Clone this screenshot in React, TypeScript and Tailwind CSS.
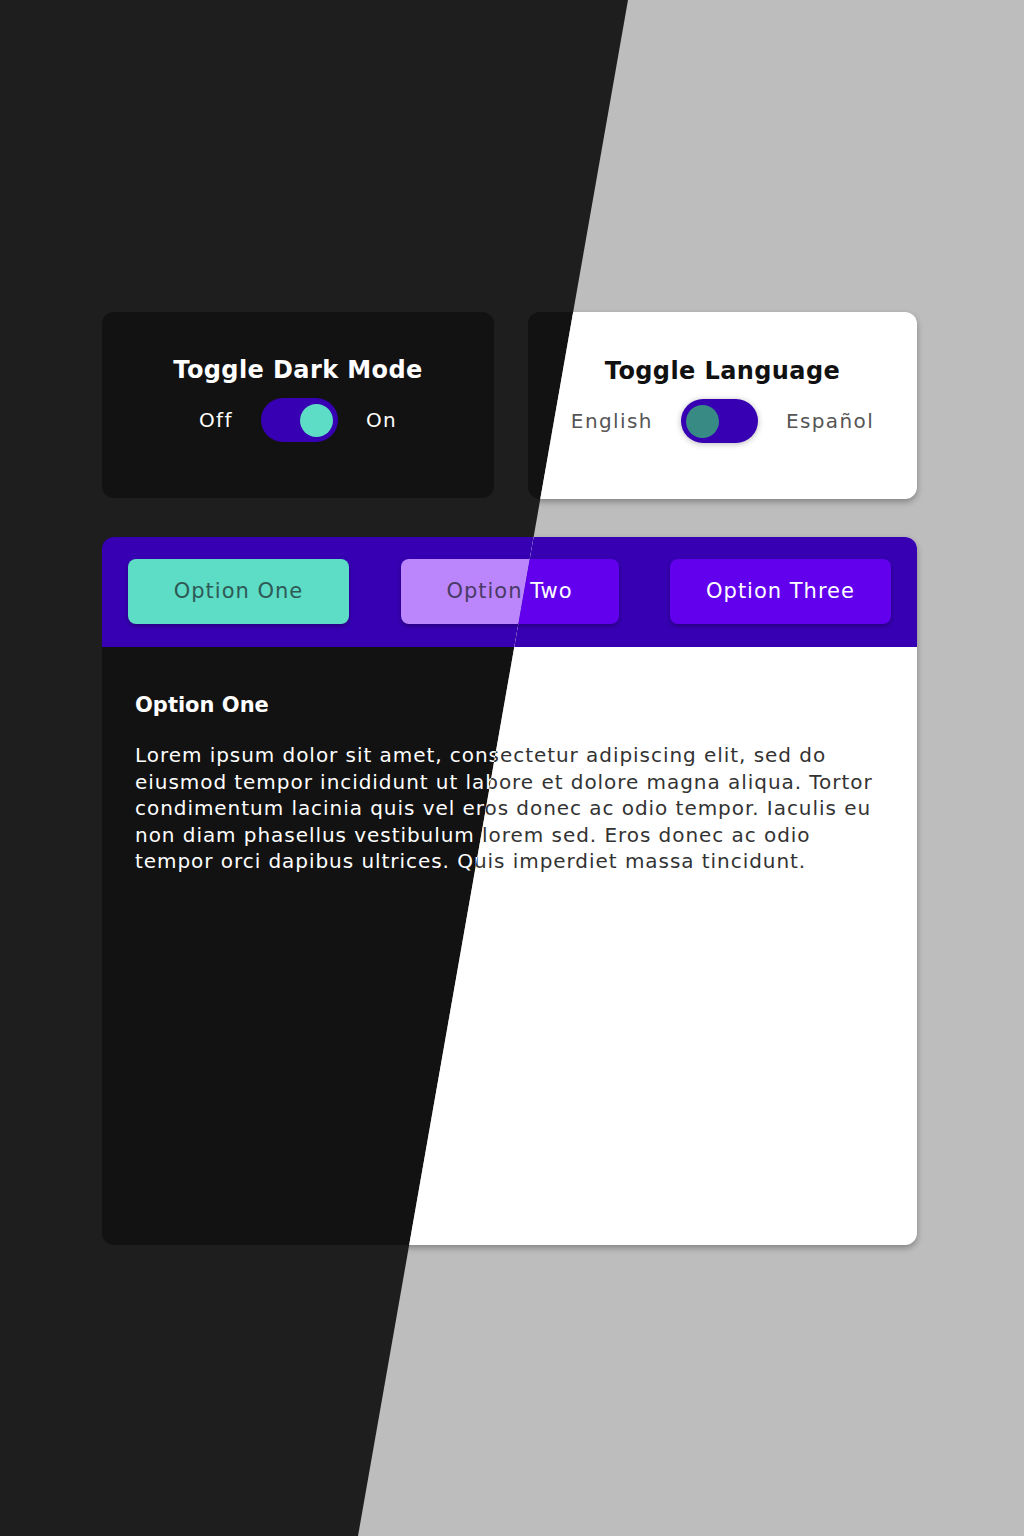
import React from "react";

const lines = [
  "Lorem ipsum dolor sit amet, consectetur adipiscing elit, sed do",
  "eiusmod tempor incididunt ut labore et dolore magna aliqua. Tortor",
  "condimentum lacinia quis vel eros donec ac odio tempor. Iaculis eu",
  "non diam phasellus vestibulum lorem sed. Eros donec ac odio",
  "tempor orci dapibus ultrices. Quis imperdiet massa tincidunt.",
];

function Toggle({ on, dark }: { on: boolean; dark: boolean }) {
  return (
    <div
      className={
        "flex items-center w-[77px] h-[44px] rounded-full bg-[#3700b3] px-[5px] " +
        (on ? "justify-end " : "justify-start ") +
        (dark ? "" : "shadow-[0_1px_6px_rgba(0,0,0,0.28)]")
      }
    >
      <div
        className={
          "w-[33px] h-[33px] rounded-full " +
          (dark ? "bg-[#5ddcc6]" : "bg-[#388a85]")
        }
      />
    </div>
  );
}

function Scene({ dark }: { dark: boolean }) {
  const card = dark
    ? "bg-[#121212]"
    : "bg-white shadow-[0_3px_6px_rgba(0,0,0,0.3)]";
  const title = dark ? "text-white" : "text-[#111111]";
  const label = dark ? "text-white" : "text-[#555555]";

  return (
    <div
      className={
        "w-full h-[1536px] pt-[312px] font-['DejaVu_Sans',sans-serif] " +
        (dark ? "bg-[#1e1e1e]" : "bg-[#bdbdbd]")
      }
    >
      <div className="ml-[102px] w-[815px] flex flex-col gap-[38px]">
        {/* Toggles */}
        <div className="flex gap-[34px]">
          <div className={"w-[392px] h-[186px] rounded-xl flex flex-col items-center pt-[42px] " + card}>
            <h2 className={"text-[24px] leading-[32px] font-bold tracking-[0.4px] " + title}>Toggle Dark Mode</h2>
            <div className="flex items-center gap-7 mt-[12px]">
              <span className={"text-[20px] tracking-[1.4px] " + label}>Off</span>
              <Toggle on={true} dark={dark} />
              <span className={"text-[20px] tracking-[1.4px] " + label}>On</span>
            </div>
          </div>
          <div className={"w-[389px] h-[187px] rounded-xl flex flex-col items-center pt-[43px] " + card}>
            <h2 className={"text-[24px] leading-[32px] font-bold tracking-[0.4px] " + title}>Toggle Language</h2>
            <div className="flex items-center gap-7 mt-[12px]">
              <span className={"text-[20px] tracking-[1.4px] " + label}>English</span>
              <Toggle on={false} dark={dark} />
              <span className={"text-[20px] tracking-[1.4px] " + label}>Español</span>
            </div>
          </div>
        </div>

        {/* Tabs */}
        <div className={"h-[708px] rounded-xl overflow-hidden flex flex-col " + card}>
          <div className="h-[110px] bg-[#3700b3] flex items-start justify-between px-[26px] pt-[22px]">
            <button className="w-[221px] h-[65px] rounded-lg bg-[#5ddcc6] text-[#2e5a55] text-[21px] tracking-[1px] shadow-[0_2px_4px_rgba(0,0,0,0.3)]">
              Option One
            </button>
            <button
              className={
                "w-[218px] h-[65px] rounded-lg text-[21px] tracking-[1px] shadow-[0_2px_4px_rgba(0,0,0,0.3)] " +
                (dark ? "bg-[#bb86fc] text-[#4a3a66]" : "bg-[#6200ee] text-white")
              }
            >
              Option Two
            </button>
            <button
              className={
                "w-[221px] h-[65px] rounded-lg text-[21px] tracking-[1px] shadow-[0_2px_4px_rgba(0,0,0,0.3)] " +
                (dark ? "bg-[#bb86fc] text-[#4a3a66]" : "bg-[#6200ee] text-white")
              }
            >
              Option Three
            </button>
          </div>
          <div className="px-[33px] pt-[45px]">
            <h3 className={"text-[21px] leading-[26px] font-bold " + (dark ? "text-white" : "text-[#111111]")}>
              Option One
            </h3>
            <p className={"mt-[24px] text-[20px] leading-[26.5px] tracking-[0.95px] " + (dark ? "text-white" : "text-[#333333]")}>
              {lines.map((l) => (
                <span key={l} className="block whitespace-nowrap">
                  {l}
                </span>
              ))}
            </p>
          </div>
        </div>
      </div>
    </div>
  );
}

export default function App() {
  return (
    <div className="relative w-full h-[1536px] overflow-hidden">
      <Scene dark={true} />
      {/* light half, cut along the diagonal */}
      <div className="absolute inset-0 [clip-path:polygon(628px_0,100%_0,100%_100%,358px_100%)]">
        <Scene dark={false} />
      </div>
    </div>
  );
}
